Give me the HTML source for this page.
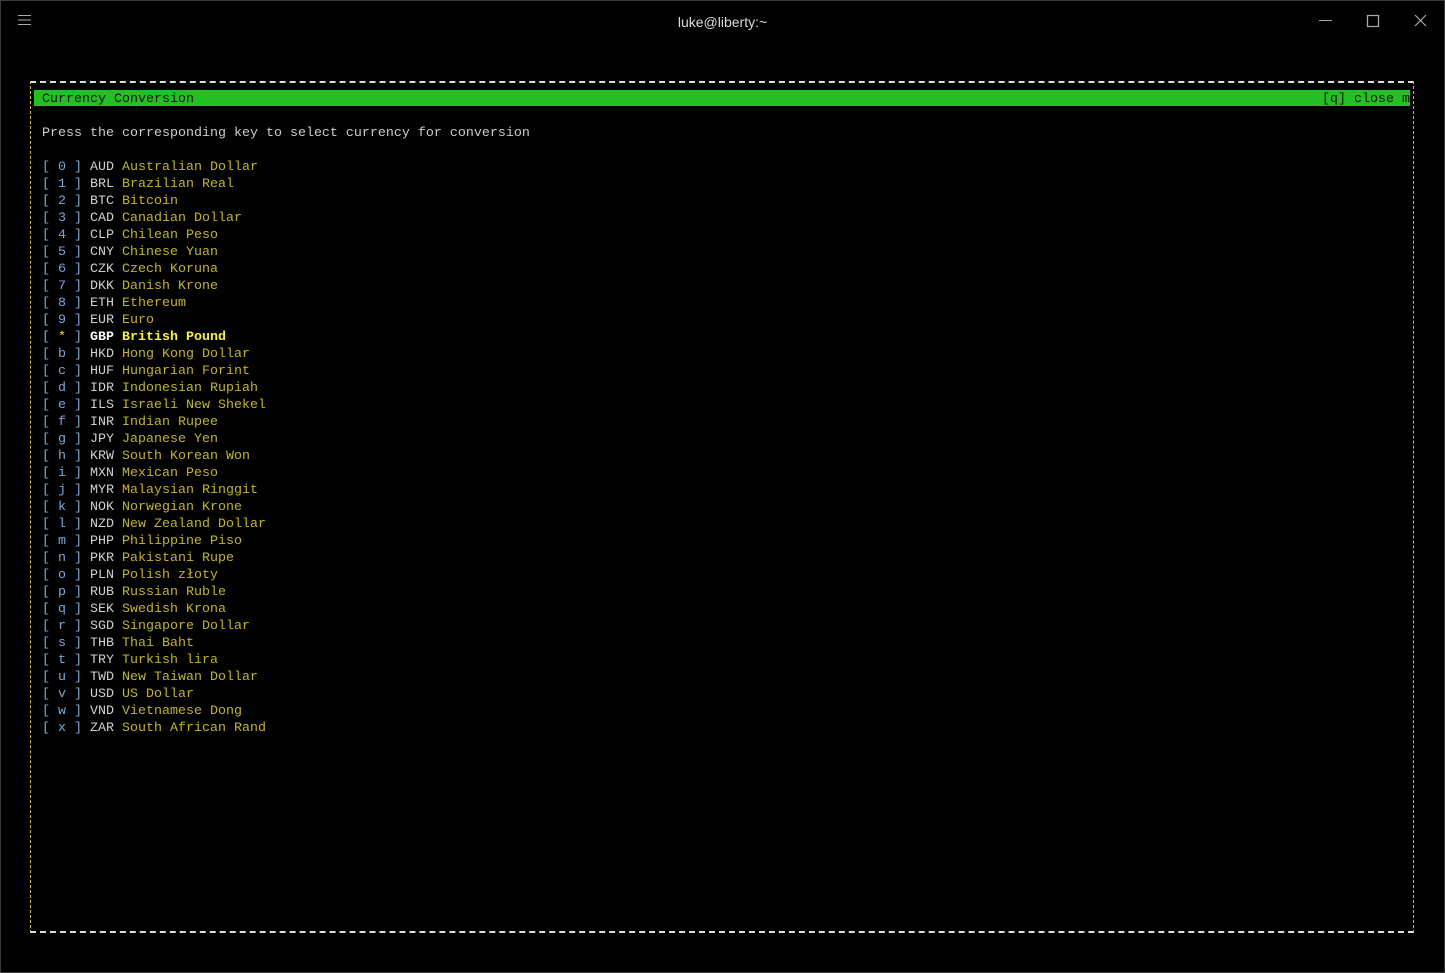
<!DOCTYPE html><html><head><style>
html,body{margin:0;padding:0;background:#000;}
body{width:1445px;height:973px;position:relative;overflow:hidden;font-family:"Liberation Mono",monospace;font-size:13.33px;}
.win{position:absolute;left:0;top:0;width:1443px;height:971px;border:1px solid #3a3a3a;background:#000;}
.title{position:absolute;top:14px;left:0;width:1445px;text-align:center;color:#ddd;font-family:"Liberation Sans",sans-serif;font-size:14px;}
.box{position:absolute;left:30px;top:81px;width:1382px;height:848px;border-top:2px dashed #ddd;border-bottom:2px dashed #ddd;border-left:1px dashed #c8c040;border-right:1px dashed #c8c040;}
.bar{position:absolute;left:34px;top:90px;width:1376px;height:16px;background:#22c022;color:#111;line-height:16px;}
.ln{position:absolute;left:42px;white-space:pre;line-height:17px;color:#ccc;}
.b{color:#7aa8d8}.c{color:#d0d0d0}.n{color:#c4b428}
.bold{font-weight:bold}
</style></head><body><div class="win"></div>
<svg style="position:absolute;left:18px;top:14px" width="14" height="12"><path d="M0 1.5H13M0 6H13M0 10.5H13" stroke="#aaa" stroke-width="1"/></svg>
<div class="title">luke@liberty:~</div>
<svg style="position:absolute;left:1316px;top:14px" width="120" height="14"><path d="M3 6.5H16" stroke="#aaa"/><path d="M51.5 1.5h11v11h-11z" stroke="#aaa" fill="none" stroke-width="1.3"/><path d="M99 1L110 12M110 1L99 12" stroke="#aaa" stroke-width="1.2"/></svg>
<div class="box"></div>
<div class="bar"><span style="position:absolute;left:8px;top:2px">Currency Conversion</span><span style="position:absolute;right:0;top:2px;white-space:pre">[q] close m</span></div>
<div class="ln" style="top:125px">Press the corresponding key to select currency for conversion</div>
<div id="list"></div>
<script>
var d=[["0","AUD","Australian Dollar"],["1","BRL","Brazilian Real"],["2","BTC","Bitcoin"],["3","CAD","Canadian Dollar"],["4","CLP","Chilean Peso"],["5","CNY","Chinese Yuan"],["6","CZK","Czech Koruna"],["7","DKK","Danish Krone"],["8","ETH","Ethereum"],["9","EUR","Euro"],["*","GBP","British Pound"],["b","HKD","Hong Kong Dollar"],["c","HUF","Hungarian Forint"],["d","IDR","Indonesian Rupiah"],["e","ILS","Israeli New Shekel"],["f","INR","Indian Rupee"],["g","JPY","Japanese Yen"],["h","KRW","South Korean Won"],["i","MXN","Mexican Peso"],["j","MYR","Malaysian Ringgit"],["k","NOK","Norwegian Krone"],["l","NZD","New Zealand Dollar"],["m","PHP","Philippine Piso"],["n","PKR","Pakistani Rupe"],["o","PLN","Polish złoty"],["p","RUB","Russian Ruble"],["q","SEK","Swedish Krona"],["r","SGD","Singapore Dollar"],["s","THB","Thai Baht"],["t","TRY","Turkish lira"],["u","TWD","New Taiwan Dollar"],["v","USD","US Dollar"],["w","VND","Vietnamese Dong"],["x","ZAR","South African Rand"]];
var h="";d.forEach(function(r,i){var g=r[0]=="*";h+='<div class="ln" style="top:'+(159+17*i)+'px"><span class="b">[ </span><span class="b" style="'+(g?'color:#f0e040':'')+'">'+r[0]+'</span><span class="b"> ]</span> <span class="c'+(g?' bold" style="color:#fff':'')+'">'+r[1]+'</span> <span class="n'+(g?' bold" style="color:#f8f040':'')+'">'+r[2]+'</span></div>';});
document.getElementById("list").innerHTML=h;
</script>
</body></html>
